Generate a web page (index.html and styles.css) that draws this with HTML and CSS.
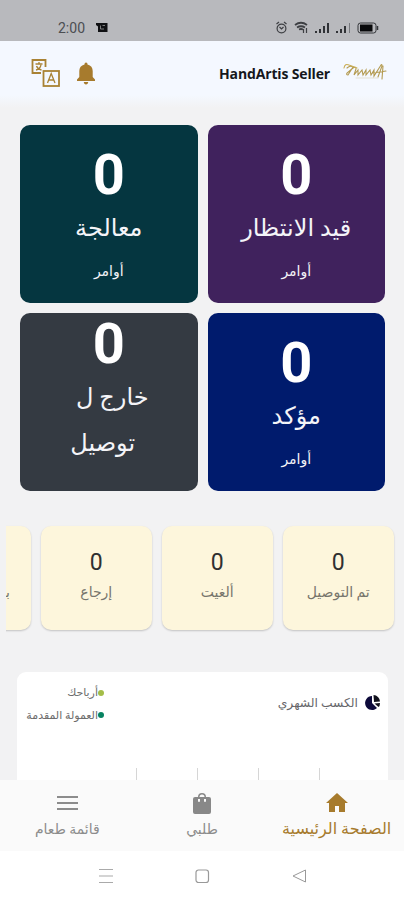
FILE: index.html
```
<!DOCTYPE html>
<html lang="ar" dir="rtl">
<head>
<meta charset="utf-8">
<meta name="viewport" content="width=device-width, initial-scale=1">
<title>HandArtis Seller</title>
<link rel="stylesheet" href="styles.css">
</head>
<body>
<div class="status">
  <div class="status-start">
    <span class="time">2:00</span>
    <svg width="12" height="12" viewBox="0 0 12 12"><path d="M0 1h11.500v9H2V4.500L0 3z" fill="#101114"/><path d="M4.500 3.500v3.500H8M6.500 3.500h2.500" fill="none" stroke="#999" stroke-width=".8"/></svg>
  </div>
  <div class="status-end">
    <svg class="status-icons" width="105" height="16" viewBox="0 0 105 16">
      <g fill="none" stroke="#3d3f43" stroke-width="1.200"><circle cx="7.500" cy="8.500" r="4.400"/><path d="M2.500 4l2.500-2M12.500 4L10 2M5.500 7l2 2 2-2"/>
      <path d="M21 5q6-4.500 12 0M23 7.500q4-2.500 8 0M25 9.500q2-1 4 0" stroke-width="1.800"/><path d="M29.500 9v4M32.500 8v5"/></g>
      <g fill="#303236"><path d="M41 11h2v2h-2zM45 9h2v4h-2zM49 6h2v7h-2zM53 3h2v10h-2z"/><path d="M62 11h2v2h-2zM66 9h2v4h-2zM70 6h2v7h-2z" /><path d="M75 3h1v10h-1z" fill="#77797e"/></g>
      <rect x="84" y="3" width="18" height="10" rx="2.500" fill="none" stroke="#333539"/><rect x="86" y="4.500" width="12.500" height="7" fill="#08090b"/><path d="M103.500 6v4" stroke="#333539" stroke-width="1.500"/>
    </svg>
  </div>
</div>
<header class="appbar">
  <div class="brand">
    <svg class="logo" width="44" height="22" viewBox="0 0 44 22"><g fill="none" stroke="#b39a50" stroke-width="1.100" stroke-linecap="round"><path d="M4 7q3-3 6-1l-5 8q-2 0-1-2l6-5q3-2 3 1l-2 6 4-5v5l4-5 1 5 3-5v5l4-5 1 5 3-5v6l7-11q1-1 1 1l-4 11M40 5l-1 13M30 12l13-2"/><path d="M1 7q1-5 5-3l8 3" stroke="#c9ad55"/><path d="M13 17h22" stroke="#ddd7bf" stroke-width=".7"/></g></svg>
    <h1 class="title" dir="ltr">HandArtis Seller</h1>
  </div>
  <div class="actions">
    <svg width="20" height="24" viewBox="0 0 20 24"><path fill="#a77b2d" d="M10 1.500c1 0 1.500.8 1.500 2 3.500.8 5.200 3.200 5.200 6.500v6l2.300 2.500V20H1v-1.500L3.300 16v-6c0-3.300 1.700-5.700 5.200-6.500 0-1.200.5-2 1.500-2zM7.800 21h4.400c0 1.500-1 2.500-2.200 2.500S7.800 22.500 7.800 21z"/></svg>
    <svg class="translate" width="30" height="30" viewBox="0 0 30 30"><g fill="none" stroke="#a98234"><path stroke-width="1.800" d="M10 15H1.500V2H14.500v7"/><path stroke-width="1.300" d="M4.500 6h7M8 4v2M10 7q-1 4-5 5M5.500 8q1 3 5 4"/><rect x="12.500" y="13" width="15.500" height="15" stroke-width="1.800"/><path stroke-width="1.300" d="M16.500 25l3.700-9.500 3.800 9.500M17.700 22h5"/></g></svg>
  </div>
</header>
<main>
  <section class="orders">
    <article class="tile purple"><b class="num">0</b><span class="name">قيد الانتظار</span><span class="unit">أوامر</span></article>
    <article class="tile teal"><b class="num">0</b><span class="name">معالجة</span><span class="unit">أوامر</span></article>
    <article class="tile blue"><b class="num">0</b><span class="name">مؤكد</span><span class="unit">أوامر</span></article>
    <article class="tile slate"><b class="num">0</b><span class="name line-first">خارج ل</span><span class="name line-second">توصيل</span></article>
  </section>
  <section class="strip">
    <article class="mini"><span class="count">0</span><span class="label">تم التوصيل</span></article>
    <article class="mini"><span class="count">0</span><span class="label">ألغيت</span></article>
    <article class="mini"><span class="count">0</span><span class="label">إرجاع</span></article>
    <article class="mini cut"><span class="count"></span><span class="label">بـ</span></article>
  </section>
  <section class="earnings">
    <div class="earn-head">
      <div class="earn-title"><svg width="17" height="16" viewBox="0 0 17 16"><path d="M8 1a7 7 0 1 0 5 12L8 8z" fill="#0d0a3a"/><path d="M9.500 0A7 7 0 0 1 16 6.500L10 7z" fill="#11111c"/><path d="M10.500 8.500l5.500-.5q0 3-1.500 4z" fill="#11111c"/></svg><span>الكسب الشهري</span></div>
      <ul class="legend">
        <li><i class="dot lime"></i><span>أرباحك</span></li>
        <li><i class="dot green"></i><span>العمولة المقدمة</span></li>
      </ul>
    </div>
    <div class="ticks"><i></i><i></i><i></i><i></i></div>
  </section>
</main>
<nav class="tabs">
  <a class="tab active"><svg width="24" height="24" viewBox="0 0 24 24"><path d="M10 21v-6h4v6h6v-9h3L12 2 1 12h3v9z" fill="#a77b2d"/></svg><span>الصفحة الرئيسية</span></a>
  <a class="tab"><svg width="24" height="24" viewBox="0 0 24 24"><path fill="#888" fill-rule="evenodd" d="M5 6h3a4 4 0 0 1 8 0h3q2 0 2 2v13q0 2-2 2H5q-2 0-2-2V8q0-2 2-2zm4.500 0h5a2.500 2.500 0 0 0-5 0zM8 8v2q0 1 1 1t1-1V8zm6 0v2q0 1 1 1t1-1V8z"/></svg><span>طلبي</span></a>
  <a class="tab"><svg width="24" height="24" viewBox="0 0 24 24"><path d="M2 6h21M2 12h21M2 18h21" stroke="#8c8c8c" stroke-width="2"/></svg><span>قائمة طعام</span></a>
</nav>
<div class="system">
  <svg width="16" height="16" viewBox="0 0 16 16"><path d="M14.500 2v12L2 8z" fill="none" stroke="#999" stroke-linejoin="round"/></svg>
  <svg width="16" height="16" viewBox="0 0 16 16"><rect x="2" y="2" width="12.500" height="12.500" rx="2.500" fill="none" stroke="#999" stroke-width="1.200"/></svg>
  <svg width="16" height="16" viewBox="0 0 16 16"><path d="M2 1.500h14M2 8h14M2 14.500h14" stroke="#aaa" stroke-width="1.200"/></svg>
</div>
</body>
</html>
```
FILE: styles.css
```
* { box-sizing: border-box; }
body { margin: 0; width: 404px; height: 900px; overflow: hidden; display: flex; flex-direction: column; background: #f2f2f3; font-family: Roboto, "DejaVu Sans", sans-serif; }
svg { display: block; flex: none; }
.status { flex: none; height: 41px; background: #b8b9bd; direction: ltr; display: flex; justify-content: space-between; padding: 20px 25px 0 58px; }
.status-start { display: flex; gap: 11px; align-items: flex-start; }
.status-start svg { margin-top: 2px; }
.time { font-size: 14px; line-height: 16px; color: #4c4e52; width: 27px; }
.appbar { flex: none; height: 67px; background: linear-gradient(#f4f8ff 0 54px, #f2f2f3); display: flex; justify-content: space-between; padding: 20px 17px 0 31px; }
.brand { display: flex; align-items: flex-start; gap: 13px; }
.title { margin: 2px 0 0; font: 700 14px/22px "Open Sans", sans-serif; letter-spacing: -.15px; color: #15171c; white-space: nowrap; }
.actions { display: flex; gap: 15px; }
.translate { margin-top: -3px; }
main { flex: 1; min-height: 0; overflow: hidden; }
.orders { display: grid; grid-template-columns: 177.500px 177.500px; grid-auto-rows: 178px; gap: 10px; padding: 16.500px 19px 0; }
.tile { border-radius: 10px; color: #f4f4f8; display: flex; flex-direction: column; align-items: center; padding-top: 20px; }
.purple { background: #40225d; }
.teal { background: #053640; }
.blue { background: #001b6d; }
.slate { background: #343a42; padding-top: 1px; }
.num { font-size: 56px; line-height: 60px; height: 60px; color: #fff; }
.name { font-size: 24px; line-height: 46px; text-align: center; white-space: nowrap; }
.line-first { padding-left: 7px; }
.line-second { padding-right: 12px; }
.unit { font-size: 14px; line-height: 20px; margin-top: 10px; }
.strip { display: flex; gap: 9.500px; margin: 29px 0 0 6px; padding: 6px 10px; overflow: hidden; }
.mini { flex: none; width: 111.500px; height: 104px; border-radius: 10px; background: #fdf6dc; box-shadow: 0 1px 2px #0003; display: flex; flex-direction: column; align-items: center; padding-top: 22px; }
.count { font-size: 23px; line-height: 30px; height: 30px; color: #303030; }
.label { font-size: 14px; line-height: 28px; color: #77756c; white-space: nowrap; }
.cut .label { align-self: flex-start; margin-right: 21px; }
.earnings { margin: 36px 16px 0 17px; background: #fff; border-radius: 9px 9px 0 0; height: 120px; padding: 10px 7px 0 8px; display: flex; flex-direction: column; justify-content: space-between; }
.earn-head { display: flex; justify-content: space-between; }
.earn-title { display: flex; align-items: center; height: 42px; gap: 6px; font-size: 12.300px; color: #66666a; white-space: nowrap; }
.legend { list-style: none; margin: 0; padding: 0; width: 79px; font-size: 11px; color: #6c6c6c; }
.legend li { display: flex; align-items: center; height: 22.500px; white-space: nowrap; }
.dot { width: 6px; height: 6px; border-radius: 50%; flex: none; }
.lime { background: #a4bd48; }
.green { background: #078361; }
.ticks { display: flex; gap: 60px; padding-right: 61px; height: 24px; }
.ticks i { width: 1px; background: #d6d6d6; }
.tabs { flex: none; height: 71px; background: #fafafa; display: flex; }
.tab { flex: 1; display: flex; flex-direction: column; align-items: center; padding-top: 11px; color: #8c8c8c; font-size: 14px; line-height: 24px; white-space: nowrap; }
.tab span { margin-top: 2px; }
.active { color: #a77b2d; font-size: 16px; }
.system { flex: none; height: 49px; background: #fff; display: flex; justify-content: center; gap: 81px; padding: 17px 0 0; }
```
